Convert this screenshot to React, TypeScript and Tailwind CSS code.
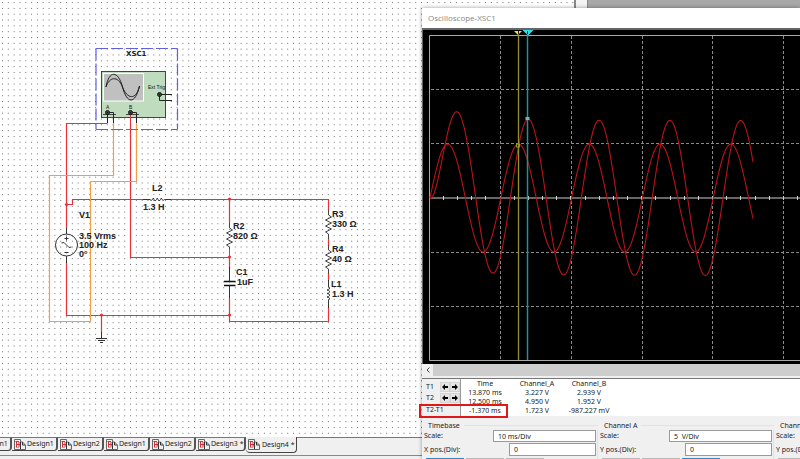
import React from "react";

const RED = "#e8303a";
const ORANGE = "#f0a040";
const labelFont = '"Liberation Sans", Arial, sans-serif';

/* ---------- schematic ---------- */

function Junction({ x, y }: { x: number; y: number }) {
  return <circle cx={x} cy={y} r={1.6} fill={RED} />;
}

function Resistor({ x, y }: { x: number; y: number }) {
  return (
    <path
      d={`M${x} ${y - 5}V${y}l3 2l-6 3l6 3l-6 3l6 3l-6 3l3 2v5`}
      fill="none"
      stroke="#444"
      strokeWidth={1}
    />
  );
}

function Port({ x, y }: { x: number; y: number }) {
  return (
    <g>
      <circle cx={x} cy={y} r={2} fill="#5a6a5a" stroke="#111" strokeWidth={1} />
      <circle cx={x} cy={y} r={1} fill="#111" />
    </g>
  );
}

const partLabels: [number, number, string][] = [
  [152, 191, "L2"],
  [143, 210, "1.3 H"],
  [79, 218, "V1"],
  [79, 239, "3.5 Vrms"],
  [79, 248, "100 Hz"],
  [79, 257, "0°"],
  [233, 229, "R2"],
  [233, 239, "820 Ω"],
  [236, 275, "C1"],
  [237, 285, "1uF"],
  [332, 217, "R3"],
  [332, 227, "330 Ω"],
  [332, 252, "R4"],
  [332, 262, "40 Ω"],
  [331, 287, "L1"],
  [332, 297, "1.3 H"],
];

function Schematic() {
  return (
    <svg className="h-full w-full" role="img" aria-label="Circuit schematic">
      <defs>
        <pattern id="dots" x="2" y="2.1" width="5.82" height="5.82" patternUnits="userSpaceOnUse">
          <rect width="1" height="1" fill="#707070" />
        </pattern>
      </defs>
      <rect width="100%" height="100%" fill="url(#dots)" />

      <g fill="none" stroke={RED} strokeWidth={1.2}>
        <path d="M107.5 123.5H66.5V229" />
        <path d="M66.5 204.5H72.5V199.5H144" />
        <path d="M170 199.5H328.5V211" />
        <path d="M130.5 123V257.5H229.5" />
        <path d="M229.5 199V223" />
        <path d="M229.5 257V269M229.5 298V321.5H328.5V307" />
        <path d="M328.5 238V246M328.5 273V281" />
        <path d="M66.5 262V315.5H229.5" />
        <path d="M101.5 315V333" />
      </g>
      <g fill="none" stroke={ORANGE} strokeWidth={1.2}>
        <path d="M113.5 123V175.5H49.5V321.5H90.5V181.5H136.5V123" />
      </g>

      <g fill="none" stroke="#333" strokeWidth={1}>
        <path d="M143 199.5h7q1 2 2.5 0q1 -3 1.5 0q1 3 2.5 0q1 -3 1.5 0q1 3 2.5 0q1 -3 1.5 0q1 2 2.5 0H171" />
        <path d="M328.5 280v7q3 1 0 2.5q-3 .5 0 1q3 1 0 2.5q-3 .5 0 1q3 1 0 2.5q-3 .5 0 1q3 1 0 2.5V308" />
        <path d="M66.5 228V234M66.5 256V263" />
        <circle cx="66.5" cy="245" r="11" />
        <path d="M61.5 243q2.500 -2 5 2t5 2" />
        <path d="M64.5 238.5h4M66.5 236.5v4M64.5 252.5h4" />
        <path d="M229.5 267V281M229.5 286V298" />
        <path d="M101.5 332V338M96 338.5H107M98 340.5H105M100 342.5H103" />
      </g>
      <path d="M224 281.5h11.5M224 285.5h11.5" stroke="#111" strokeWidth={1.6} />
      <Resistor x={229.5} y={228} />
      <path d="M229.5 249V257" stroke={RED} />
      <Resistor x={328.5} y={215} />
      <Resistor x={328.5} y={250} />

      <Junction x={66.5} y={204.5} />
      <Junction x={229.5} y={199} />
      <Junction x={229.5} y={257} />
      <Junction x={229.5} y={315} />
      <Junction x={101.5} y={315} />

      <g fill="none" stroke="#6060e0" strokeWidth={1.2} strokeDasharray="12 3">
        <path d="M96 48.5H177.5" />
        <path d="M96 129.5H177.5" />
        <path d="M96 48.5V129.5" />
        <path d="M177.5 48.5V129.5" />
      </g>
      <rect x="101.5" y="71.5" width="64" height="46" fill="#bfdcbf" stroke="#404840" />
      <rect x="103.5" y="73.5" width="40" height="27.5" fill="#c0c0c0" stroke="#fff" />
      <g fill="none" stroke="#222" strokeWidth={1}>
        <path d="M106 87C109 70 118 70 122.5 87S135 105 139.5 86" />
        <path d="M106 87C109 77 118 75 122.5 87S136 101 139.5 86" />
        <path d="M103 114.5h13M126 114.5h13" strokeWidth={0.8} />
        <path d="M107.5 112V123M107.5 112.5H113.5V123" />
        <path d="M130.5 112.5H136.5V123" />
        <path d="M159.5 94.5H172M159.5 94.5V100.5H172" />
      </g>
      <path d="M130.5 114V123" stroke={RED} />
      <Port x={107.5} y={112.5} />
      <Port x={130.5} y={112.5} />
      <Port x={159.5} y={94.5} />
      <g fontSize="5" fill="#111" fontFamily={labelFont}>
        <text x="106" y="109">A</text>
        <text x="129" y="109">B</text>
        <text x="148" y="89">Ext Trig</text>
      </g>
      <text x="126" y="56" fontSize="7" fontWeight="bold" fill="#222" fontFamily='"DejaVu Sans", sans-serif'>
        XSC1
      </text>
      <g fontSize="9" fontWeight="bold" fill="#222" fontFamily={labelFont}>
        {partLabels.map(([x, y, t]) => (
          <text key={`${x}-${y}`} x={x} y={y}>
            {t}
          </text>
        ))}
      </g>
    </svg>
  );
}

/* ---------- design tabs ---------- */

function TabIcon() {
  return (
    <svg width="12" height="11" viewBox="0 0 12 11" className="shrink-0">
      <path d="M.5 .5H6.5V3H8.5L11.5 6V10.5H.5Z" fill="#f4f0f0" stroke="#666" />
      <path d="M6.5 3V10M8.500 3V6H11" fill="none" stroke="#333" />
      <path d="M1.500 2.5H5M2.500 2V8.5M2 5.5H6M5 3V7M3.500 9L6 6.5" fill="none" stroke="#d03038" />
    </svg>
  );
}

function DesignTabs() {
  const tabs = ["Design1", "Design1", "Design2", "Design1", "Design2"];
  return (
    <nav className="flex h-[18px] items-start" aria-label="Open designs">
      <div className="-ml-[34px] flex">
        {tabs.map((name, i) => (
          <button
            key={i}
            className="flex h-[14px] w-[46px] items-center gap-px rounded-br-sm border-t border-r-2 border-b border-t-[#777] border-r-[#555] border-b-[#444] pl-0.5 whitespace-nowrap"
          >
            <TabIcon />
            {name}
          </button>
        ))}
        <button className="flex h-[14px] w-[50px] items-center gap-px rounded-br-sm border-t border-r-2 border-b border-t-[#777] border-r-[#555] border-b-[#444] pl-0.5 whitespace-nowrap">
          <TabIcon />
          Design3 *
        </button>
        <button
          aria-current="page"
          className="flex h-[16px] w-[51px] items-center gap-[2px] rounded-b-sm border-r border-b border-[#444] pl-0.5 whitespace-nowrap"
        >
          <TabIcon />
          Design4 *
        </button>
      </div>
      <div className="flex-1 border-t border-[#777]" />
    </nav>
  );
}

/* ---------- oscilloscope ---------- */

const MID = 168;
const PERIOD = 70.8;

function trace(value: (t: number) => number) {
  let d = "";
  for (let t = 0; t <= 323; t += 1) {
    d += `${t === 0 ? "M" : "L"}${t + 7} ${(MID - value(t)).toFixed(1)}`;
  }
  return d;
}

const channelA = trace((t) => 54 * Math.sin((2 * Math.PI * t) / PERIOD));
const channelB = trace(
  (t) =>
    77.5 * Math.sin((2 * Math.PI * (t - 9.8)) / PERIOD) +
    52 * Math.exp(-t / 11) +
    7 * Math.exp(-t / 55),
);

function Plot() {
  const columns = Array.from({ length: 20 }, (_, i) => 77.5 + Math.round(i * 70.8));
  const ticks = Array.from({ length: 100 }, (_, i) => 20.5 + Math.round(i * 14.16));
  return (
    <svg className="block h-[334px] w-full bg-black" role="img" aria-label="Oscilloscope traces">
      <g fill="none" stroke="#8a8a8a" strokeWidth={1} strokeDasharray="3 2">
        {columns.map((x) => (
          <path key={x} d={`M${x} 6V330`} />
        ))}
        {[59.5, 113.5, 222.5, 276.5].map((y) => (
          <path key={y} d={`M8 ${y}H2000`} />
        ))}
      </g>
      <path d="M2000 5.5H6.5V330.5H2000" fill="none" stroke="#a8a8a8" />
      <path d="M8 168H2000" stroke="#8a8a8a" strokeWidth={1.5} />
      {ticks.map((x) => (
        <path key={x} d={`M${x} 166V170`} stroke="#d0d0d0" />
      ))}
      <path d={channelA} fill="none" stroke="#b81418" strokeWidth={1.1} />
      <path d={channelB} fill="none" stroke="#b81418" strokeWidth={1.1} />
      <path d="M95.5 5V330" stroke="#98922a" strokeWidth={1.3} />
      <path d="M104.5 5V330" stroke="#238f98" strokeWidth={1.5} />
      <path d="M91 1h8l-4 4z" fill="#e8e040" />
      <path d="M99.5 0h11l-5.5 5.5z" fill="#30e0e8" />
      <path d="M95.5 1v3M104.5 1v3" stroke="#222" />
      <rect x="93.5" y="114" width="3" height="3" fill="none" stroke="#8a9a20" />
      <rect x="102.5" y="87" width="4" height="3" fill="#70b8b8" />
    </svg>
  );
}

function ArrowButton({ dir, cursor }: { dir: "left" | "right"; cursor: string }) {
  return (
    <button
      aria-label={`Move ${cursor} ${dir}`}
      className="flex h-[10px] w-[10px] items-center justify-center border border-[#d4d4d4] bg-[#e4e4e4]"
    >
      <svg width="8" height="8" viewBox="0 0 8 8" className="shrink-0">
        <path
          d={dir === "left" ? "M1 4L4 1V3H7V5H4V7Z" : "M7 4L4 1V3H1V5H4V7Z"}
          fill="#000"
        />
      </svg>
    </button>
  );
}

const readings = [
  ["13.870 ms", "3.227 V", "2.939 V"],
  ["12.500 ms", "4.950 V", "1.952 V"],
  ["-1.370 ms", "1.723 V", "-987.227 mV"],
];

function Readout() {
  return (
    <div className="relative flex h-[38px] border-t border-[#777] bg-white">
      <div className="flex w-[39px] flex-col gap-px border-r border-[#999] bg-[#f0f0f0] pt-[3px] pl-1">
        {["T1", "T2"].map((c) => (
          <div key={c} className="flex h-[10px] items-center">
            <span className="w-[14px]">{c}</span>
            <ArrowButton dir="left" cursor={c} />
            <ArrowButton dir="right" cursor={c} />
          </div>
        ))}
        <span className="pt-px">T2-T1</span>
      </div>
      <table className="-ml-0.5 h-[36px] w-[156px] table-fixed border-collapse text-center leading-[9px] whitespace-nowrap">
        <thead>
          <tr>
            {["Time", "Channel_A", "Channel_B"].map((h) => (
              <th key={h} className="p-0 font-normal">
                {h}
              </th>
            ))}
          </tr>
        </thead>
        <tbody>
          {readings.map((row) => (
            <tr key={row[0]}>
              {row.map((v) => (
                <td key={v} className="p-0">
                  {v}
                </td>
              ))}
            </tr>
          ))}
        </tbody>
      </table>
      <div className="absolute top-[25px] -left-[3px] h-[14px] w-[89px] border-2 border-[#e01818]" />
    </div>
  );
}

type GroupProps = {
  title: string;
  posLabel: string;
  scale: string;
  active: number;
};

function ControlGroup({ title, posLabel, scale, active }: GroupProps) {
  const id = title.replace(" ", "-");
  return (
    <section className="w-[176px] shrink-0 pl-0.5">
      <div className="flex h-[9px] items-center gap-1 pl-1 leading-[9px]">
        <h2>{title}</h2>
        <div className="h-px flex-1 bg-[#e2e2e2]" />
      </div>
      <div className="flex flex-col gap-px border-r border-[#e2e2e2] pr-px">
        <div className="flex items-center justify-between">
          <label htmlFor={`${id}-scale`}>Scale:</label>
          <input
            id={`${id}-scale`}
            defaultValue={scale}
            className="h-[12px] w-[103px] border border-[#999] bg-white px-1"
          />
        </div>
        <div className="flex items-center justify-between">
          <label htmlFor={`${id}-pos`}>{posLabel}</label>
          <input
            id={`${id}-pos`}
            defaultValue="0"
            className="h-[13px] w-[87px] border border-[#999] bg-white px-1"
          />
        </div>
        <div className="flex gap-0.5 pt-px pl-0.5">
          {[0, 1, 2].map((i) => (
            <button
              key={i}
              aria-label={`${title} mode ${i + 1}`}
              className={`h-[12px] w-[38px] border ${i === active ? "border-[#2f86cc] bg-[#e5f1fb]" : "border-[#b8b8b8] bg-[#e4e4e4]"}`}
            />
          ))}
        </div>
      </div>
    </section>
  );
}

function Oscilloscope() {
  return (
    <section className="absolute top-2 right-0 bottom-0 left-[422px] flex flex-col bg-[#f0f0f0] shadow-[0_0_4px_rgba(0,0,0,0.4)]">
      <header className="h-5 shrink-0 bg-white pl-1.5 font-['Open_Sans','Noto_Sans',sans-serif] text-[8px] leading-[19px] text-[#888]">
        Oscilloscope-XSC1
      </header>
      <div className="shrink-0 border-t-2 border-l border-[#666]">
        <Plot />
      </div>
      <div className="mb-0.5 flex h-[12px] shrink-0 items-center bg-[#cdcdcd]">
        <button aria-label="Scroll left" className="flex h-full w-[11px] items-center justify-center bg-[#f0f0f0]">
          <svg width="4" height="6" viewBox="0 0 4 6">
            <path d="M3.5 .5L1 3L3.5 5.5" fill="none" stroke="#444" />
          </svg>
        </button>
      </div>
      <Readout />
      <div className="flex min-h-0 flex-1 overflow-hidden pt-[5px]">
        <ControlGroup title="Timebase" posLabel="X pos.(Div):" scale="10 ms/Div" active={0} />
        <ControlGroup title="Channel A" posLabel="Y pos.(Div):" scale="5  V/Div" active={2} />
        <ControlGroup title="Channel B" posLabel="Y pos.(Div):" scale="5  V/Div" active={2} />
      </div>
    </section>
  );
}

export default function App() {
  return (
    <main className="relative flex h-screen flex-col overflow-hidden bg-[#f0f0f0] font-['Noto_Sans','Open_Sans',sans-serif] text-[7px] leading-[10px] text-[#222]">
      <div className="flex min-h-0 flex-1">
        <div className="w-[576px] border-r-2 border-[#888] bg-white">
          <Schematic />
        </div>
        <div className="w-3 border-r border-[#888] bg-[#f4f4f4]" />
        <div className="flex-1 bg-[#a8a8a8]" />
      </div>
      <DesignTabs />
      <div className="h-1 border-t border-[#888]" />
      <Oscilloscope />
    </main>
  );
}
